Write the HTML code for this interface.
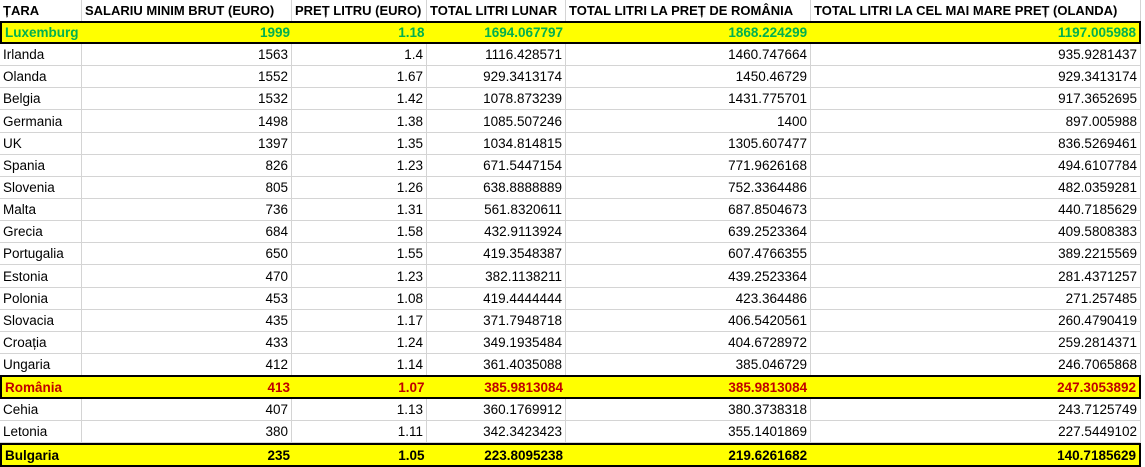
<!DOCTYPE html>
<html><head><meta charset="utf-8"><style>
body{margin:0;width:1145px;height:467px;background:#fff;overflow:hidden;font-family:"Liberation Sans",Arial,sans-serif;font-size:13.5px;color:#000;position:relative}
.r{position:absolute;left:0;width:1141px;display:flex;box-sizing:border-box}
.c{box-sizing:border-box;border-right:1px solid #d4d4d4;border-bottom:1px solid #d4d4d4;text-align:right;padding:0 3px;white-space:nowrap;overflow:hidden;display:flex;align-items:center;justify-content:flex-end}
.c:first-child{justify-content:flex-start}
.w1{width:82px}.w2{width:210px}.w3{width:135px}.w4{width:139px}.w5{width:245px}.w6{width:330px}
.h{font-weight:bold;font-size:13px}
.h .c{justify-content:flex-start;border-bottom:none}
.y{background:#ff0;border:2px solid #000;font-weight:bold}
.y .c{border:none}
.g{color:#00b050}.red{color:#c00000}
</style></head><body>
<div class="r h" style="top:0;height:21px"><div class="c w1">ȚARA</div><div class="c w2">SALARIU MINIM BRUT (EURO)</div><div class="c w3">PREȚ LITRU (EURO)</div><div class="c w4">TOTAL LITRI LUNAR</div><div class="c w5">TOTAL LITRI LA PREȚ DE ROMÂNIA</div><div class="c w6">TOTAL LITRI LA CEL MAI MARE PREȚ (OLANDA)</div></div>
<div class="r y g" style="top:21px;height:23px"><div class="c w1">Luxemburg</div><div class="c w2">1999</div><div class="c w3">1.18</div><div class="c w4">1694.067797</div><div class="c w5">1868.224299</div><div class="c w6">1197.005988</div></div>
<div class="r" style="top:44px;height:22px"><div class="c w1">Irlanda</div><div class="c w2">1563</div><div class="c w3">1.4</div><div class="c w4">1116.428571</div><div class="c w5">1460.747664</div><div class="c w6">935.9281437</div></div>
<div class="r" style="top:66px;height:22px"><div class="c w1">Olanda</div><div class="c w2">1552</div><div class="c w3">1.67</div><div class="c w4">929.3413174</div><div class="c w5">1450.46729</div><div class="c w6">929.3413174</div></div>
<div class="r" style="top:88px;height:22px"><div class="c w1">Belgia</div><div class="c w2">1532</div><div class="c w3">1.42</div><div class="c w4">1078.873239</div><div class="c w5">1431.775701</div><div class="c w6">917.3652695</div></div>
<div class="r" style="top:110px;height:23px"><div class="c w1">Germania</div><div class="c w2">1498</div><div class="c w3">1.38</div><div class="c w4">1085.507246</div><div class="c w5">1400</div><div class="c w6">897.005988</div></div>
<div class="r" style="top:133px;height:22px"><div class="c w1">UK</div><div class="c w2">1397</div><div class="c w3">1.35</div><div class="c w4">1034.814815</div><div class="c w5">1305.607477</div><div class="c w6">836.5269461</div></div>
<div class="r" style="top:155px;height:22px"><div class="c w1">Spania</div><div class="c w2">826</div><div class="c w3">1.23</div><div class="c w4">671.5447154</div><div class="c w5">771.9626168</div><div class="c w6">494.6107784</div></div>
<div class="r" style="top:177px;height:22px"><div class="c w1">Slovenia</div><div class="c w2">805</div><div class="c w3">1.26</div><div class="c w4">638.8888889</div><div class="c w5">752.3364486</div><div class="c w6">482.0359281</div></div>
<div class="r" style="top:199px;height:22px"><div class="c w1">Malta</div><div class="c w2">736</div><div class="c w3">1.31</div><div class="c w4">561.8320611</div><div class="c w5">687.8504673</div><div class="c w6">440.7185629</div></div>
<div class="r" style="top:221px;height:22px"><div class="c w1">Grecia</div><div class="c w2">684</div><div class="c w3">1.58</div><div class="c w4">432.9113924</div><div class="c w5">639.2523364</div><div class="c w6">409.5808383</div></div>
<div class="r" style="top:243px;height:22px"><div class="c w1">Portugalia</div><div class="c w2">650</div><div class="c w3">1.55</div><div class="c w4">419.3548387</div><div class="c w5">607.4766355</div><div class="c w6">389.2215569</div></div>
<div class="r" style="top:265px;height:23px"><div class="c w1">Estonia</div><div class="c w2">470</div><div class="c w3">1.23</div><div class="c w4">382.1138211</div><div class="c w5">439.2523364</div><div class="c w6">281.4371257</div></div>
<div class="r" style="top:288px;height:22px"><div class="c w1">Polonia</div><div class="c w2">453</div><div class="c w3">1.08</div><div class="c w4">419.4444444</div><div class="c w5">423.364486</div><div class="c w6">271.257485</div></div>
<div class="r" style="top:310px;height:22px"><div class="c w1">Slovacia</div><div class="c w2">435</div><div class="c w3">1.17</div><div class="c w4">371.7948718</div><div class="c w5">406.5420561</div><div class="c w6">260.4790419</div></div>
<div class="r" style="top:332px;height:22px"><div class="c w1">Croația</div><div class="c w2">433</div><div class="c w3">1.24</div><div class="c w4">349.1935484</div><div class="c w5">404.6728972</div><div class="c w6">259.2814371</div></div>
<div class="r" style="top:354px;height:22px"><div class="c w1">Ungaria</div><div class="c w2">412</div><div class="c w3">1.14</div><div class="c w4">361.4035088</div><div class="c w5">385.046729</div><div class="c w6">246.7065868</div></div>
<div class="r y red" style="top:375px;height:24px"><div class="c w1">România</div><div class="c w2">413</div><div class="c w3">1.07</div><div class="c w4">385.9813084</div><div class="c w5">385.9813084</div><div class="c w6">247.3053892</div></div>
<div class="r" style="top:399px;height:22px"><div class="c w1">Cehia</div><div class="c w2">407</div><div class="c w3">1.13</div><div class="c w4">360.1769912</div><div class="c w5">380.3738318</div><div class="c w6">243.7125749</div></div>
<div class="r" style="top:421px;height:22px"><div class="c w1">Letonia</div><div class="c w2">380</div><div class="c w3">1.11</div><div class="c w4">342.3423423</div><div class="c w5">355.1401869</div><div class="c w6">227.5449102</div></div>
<div class="r y" style="top:443px;height:24px"><div class="c w1">Bulgaria</div><div class="c w2">235</div><div class="c w3">1.05</div><div class="c w4">223.8095238</div><div class="c w5">219.6261682</div><div class="c w6">140.7185629</div></div>
</body></html>
